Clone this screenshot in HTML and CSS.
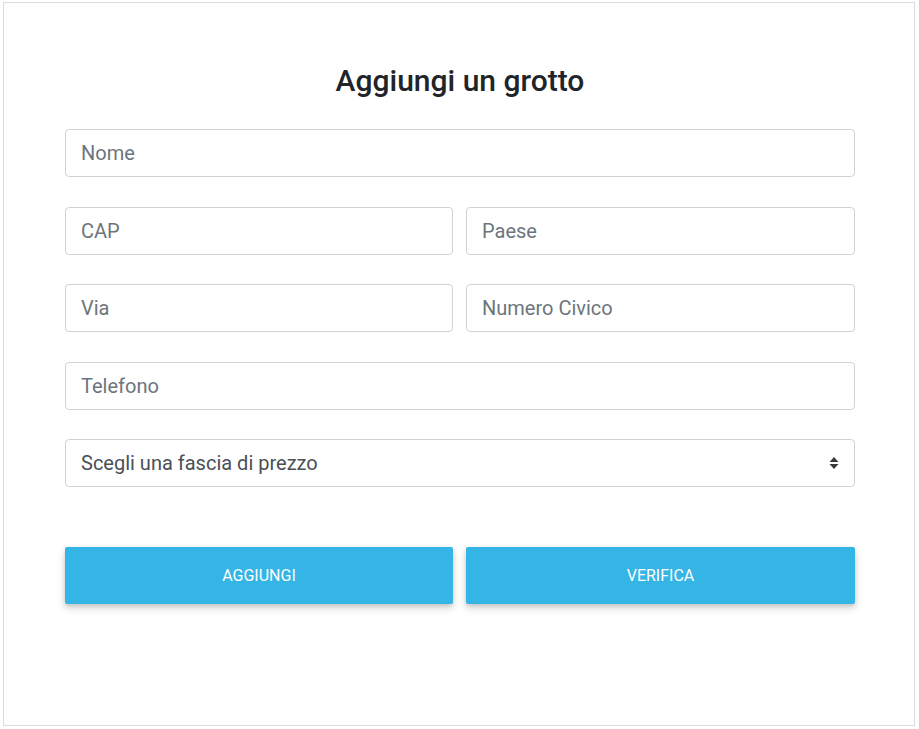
FILE: index.html
```html
<!DOCTYPE html>
<html lang="it">
<head>
<meta charset="utf-8">
<title>Aggiungi un grotto</title>
<link rel="stylesheet" href="styles.css">
</head>
<body>
<div class="card">
  <form class="form">
    <h1 class="title">Aggiungi un grotto</h1>
    <div class="row"><input class="field" type="text" placeholder="Nome"></div>
    <div class="row two">
      <input class="field" type="text" placeholder="CAP">
      <input class="field" type="text" placeholder="Paese">
    </div>
    <div class="row two">
      <input class="field" type="text" placeholder="Via">
      <input class="field" type="text" placeholder="Numero Civico">
    </div>
    <div class="row"><input class="field" type="text" placeholder="Telefono"></div>
    <div class="row">
      <div class="select">
        <span>Scegli una fascia di prezzo</span>
        <svg class="caret" width="10" height="14" viewBox="0 0 10 14"><path d="M5 1 L9.5 6 H0.5 Z M5 13 L0.5 8 H9.5 Z" fill="#343a40"/></svg>
      </div>
    </div>
    <div class="buttons">
      <button type="button" class="btn">AGGIUNGI</button>
      <button type="button" class="btn">VERIFICA</button>
    </div>
  </form>
</div>
</body>
</html>
```
FILE: styles.css
```css
* { box-sizing: border-box; }
html, body { margin: 0; padding: 0; background: #fff; }
body { font-family: Roboto, "Liberation Sans", sans-serif; color: #212529; }
.card {
  margin: 2px 4px 0 3px;
  height: 724px;
  border: 1px solid #dcdcdc;
  background: #fff;
}
.form {
  width: 790px;
  margin-left: 61px;
  padding-top: 61px;
}
.title {
  margin: 0 0 31px;
  text-align: center;
  font-size: 30px;
  font-weight: 500;
  line-height: 34px;
  color: #212529;
}
.row { margin-bottom: 29.5px; }
.row.two { display: grid; grid-template-columns: 388px 1fr; gap: 13px; }
.field, .select {
  display: block;
  width: 100%;
  height: 48px;
  padding: 0 15px;
  font-family: Roboto, "Liberation Sans", sans-serif;
  font-size: 20px;
  color: #495057;
  background: #fff;
  border: 1px solid #ced4da;
  border-radius: 4px;
  outline: none;
}
.field::placeholder { color: #6c757d; opacity: 1; }
.select { display: flex; align-items: center; justify-content: space-between; padding-right: 15px; }
.caret { display: block; }
.buttons {
  display: grid;
  grid-template-columns: 388px 1fr;
  gap: 13px;
  margin-top: 60px;
}
.btn {
  height: 57px;
  border: none;
  border-radius: 2px;
  background: #35b5e5;
  color: #fff;
  font-family: Roboto, "Liberation Sans", sans-serif;
  font-size: 16px;
  font-weight: 400;
  box-shadow: 0 4px 8px rgba(0,0,0,0.16), 0 2px 4px rgba(0,0,0,0.12);
}
```
